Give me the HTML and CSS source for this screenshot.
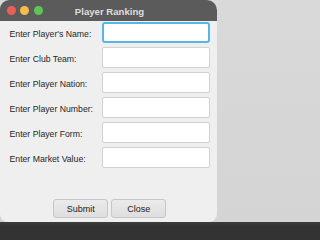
FILE: index.html
```html
<!DOCTYPE html>
<html>
<head>
<meta charset="utf-8">
<link rel="stylesheet" href="styles.css">
</head>
<body>
<div class="window">
  <div class="titlebar">
    <div class="lights">
      <span class="light red"></span>
      <span class="light yellow"></span>
      <span class="light green"></span>
    </div>
    <div class="title">Player Ranking</div>
    <div class="spacer"></div>
  </div>
  <div class="content">
    <div class="form">
      <label class="label">Enter Player's Name:</label>
      <input class="field focused" type="text">
      <label class="label">Enter Club Team:</label>
      <input class="field" type="text">
      <label class="label">Enter Player Nation:</label>
      <input class="field" type="text">
      <label class="label">Enter Player Number:</label>
      <input class="field" type="text">
      <label class="label">Enter Player Form:</label>
      <input class="field" type="text">
      <label class="label">Enter Market Value:</label>
      <input class="field" type="text">
    </div>
    <div class="buttons">
      <button class="btn">Submit</button>
      <button class="btn">Close</button>
    </div>
  </div>
</div>
</body>
</html>
```
FILE: styles.css
```css
html {
  margin: 0;
  padding: 0;
  height: 227px;
  background: linear-gradient(to bottom, #d9d9d9 0, #d4d4d4 222px, #3b3b3b 222px, #333 227px) no-repeat;
  background-size: 100% 227px;
  background-color: #333;
}
body {
  margin: 0;
  padding: 0;
  width: 220px;
  height: 227px;
  overflow: hidden;
  font-family: "Liberation Sans", Arial, sans-serif;
}
.window {
  width: 217px;
  height: 222px;
  background: #efefef;
  border-radius: 9px 10px 8px 8px;
  overflow: hidden;
  display: flex;
  flex-direction: column;
}
.titlebar {
  height: 21px;
  flex: none;
  background: #5b5b5b;
  display: grid;
  grid-template-columns: 1fr auto 1fr;
  align-items: center;
}
.lights {
  display: flex;
  gap: 4.5px;
  padding-left: 6.5px;
}
.light {
  width: 9px;
  height: 9px;
  border-radius: 50%;
}
.red { background: #ec5f57; }
.yellow { background: #f4bc4e; }
.green { background: #5ec453; }
.title {
  color: #dedede;
  font-weight: bold;
  font-size: 9.6px;
  padding-top: 1px;
  padding-left: 2px;
}
.content {
  flex: 1;
  display: flex;
  flex-direction: column;
  padding: 1px 7px 4px 9.5px;
}
.form {
  display: grid;
  grid-template-columns: 92.5px 108px;
  grid-auto-rows: 21px;
  row-gap: 4px;
  align-items: center;
}
.label {
  font-size: 8.7px;
  color: #262626;
  padding-top: 2.5px;
}
.field {
  box-sizing: border-box;
  height: 21px;
  width: 108px;
  margin: 0;
  padding: 0;
  background: #fff;
  border: 1px solid #d2d2d2;
  border-radius: 2px;
  outline: none;
}
.field.focused {
  border: 2.5px solid #56b5ea;
  border-radius: 3px;
}
.buttons {
  margin-top: auto;
  display: flex;
  justify-content: center;
  gap: 3px;
}
.btn {
  box-sizing: border-box;
  width: 55px;
  height: 19px;
  margin: 0;
  padding: 0;
  font-family: "Liberation Sans", Arial, sans-serif;
  font-size: 9px;
  color: #222;
  background: linear-gradient(to bottom, #ebebeb, #dedede);
  border: 1px solid #c6c6c6;
  border-radius: 3px;
}
```
